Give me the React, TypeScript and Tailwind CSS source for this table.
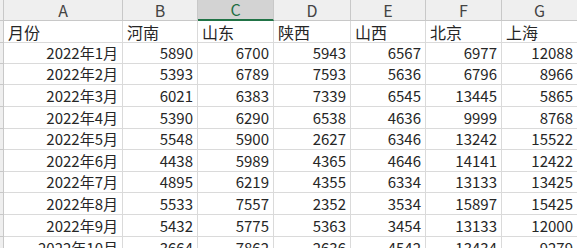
import React from 'react';

const cols = ['A', 'B', 'C', 'D', 'E', 'F', 'G'];
const widths = ['w-[119px]', 'w-[75px]', 'w-[76px]', 'w-[77px]', 'w-[75px]', 'w-[76px]', 'w-[76px]'];
const rowHeights = ['h-[22px]', 'h-[21px]', 'h-[21px]', 'h-[22px]', 'h-[22px]', 'h-[21px]', 'h-[22px]', 'h-[21px]', 'h-[22px]', 'h-[22px]', 'h-[22px]'];

const header = ['月份', '河南', '山东', '陕西', '山西', '北京', '上海'];
const rows: (string | number)[][] = [
  ['2022年1月', 5890, 6700, 5943, 6567, 6977, 12088],
  ['2022年2月', 5393, 6789, 7593, 5636, 6796, 8966],
  ['2022年3月', 6021, 6383, 7339, 6545, 13445, 5865],
  ['2022年4月', 5390, 6290, 6538, 4636, 9999, 8768],
  ['2022年5月', 5548, 5900, 2627, 6346, 13242, 15522],
  ['2022年6月', 4438, 5989, 4365, 4646, 14141, 12422],
  ['2022年7月', 4895, 6219, 4355, 6334, 13133, 13425],
  ['2022年8月', 5533, 7557, 2352, 3534, 15897, 15425],
  ['2022年9月', 5432, 5775, 5363, 3454, 13133, 12000],
  ['2022年10月', 3664, 7862, 2636, 4542, 13434, 9279],
];

const font = { fontFamily: '"Noto Sans CJK SC", "Liberation Sans", sans-serif' };

export default function App() {
  return (
    <div className="w-[577px] h-[248px] overflow-hidden bg-white text-[#262626]" style={font}>
      {/* column letters */}
      <div className="flex h-[21px]">
        <div className="w-[4px] shrink-0 bg-[#efefef] border-r border-b border-[#c8c8c8]" />
        {cols.map((c, i) => (
          <div
            key={c}
            className={`${widths[i]} shrink-0 flex items-center justify-center text-[16px] leading-[19px] border-r ${
              c === 'C'
                ? 'bg-[#d3d3d3] text-[#1e6e42] border-b-2 border-b-[#217346] border-r-[#c8c8c8]'
                : 'bg-[#efefef] text-[#444] border-b border-[#c8c8c8]'
            }`}
          >
            {c}
          </div>
        ))}
      </div>

      {[header, ...rows].map((row, r) => (
        <div key={r} className={`flex ${rowHeights[r]}`}>
          <div className="w-[4px] shrink-0 bg-[#efefef] border-r border-b border-[#c8c8c8]" />
          {row.map((v, i) => (
            <div
              key={i}
              className={`${widths[i]} shrink-0 flex items-center border-r border-b border-[#dadada] text-[15px] leading-[20px] px-[4px] whitespace-nowrap ${
                r === 0 ? 'justify-start text-[16px]' : 'justify-end'
              }`}
            >
              {v}
            </div>
          ))}
        </div>
      ))}
    </div>
  );
}
